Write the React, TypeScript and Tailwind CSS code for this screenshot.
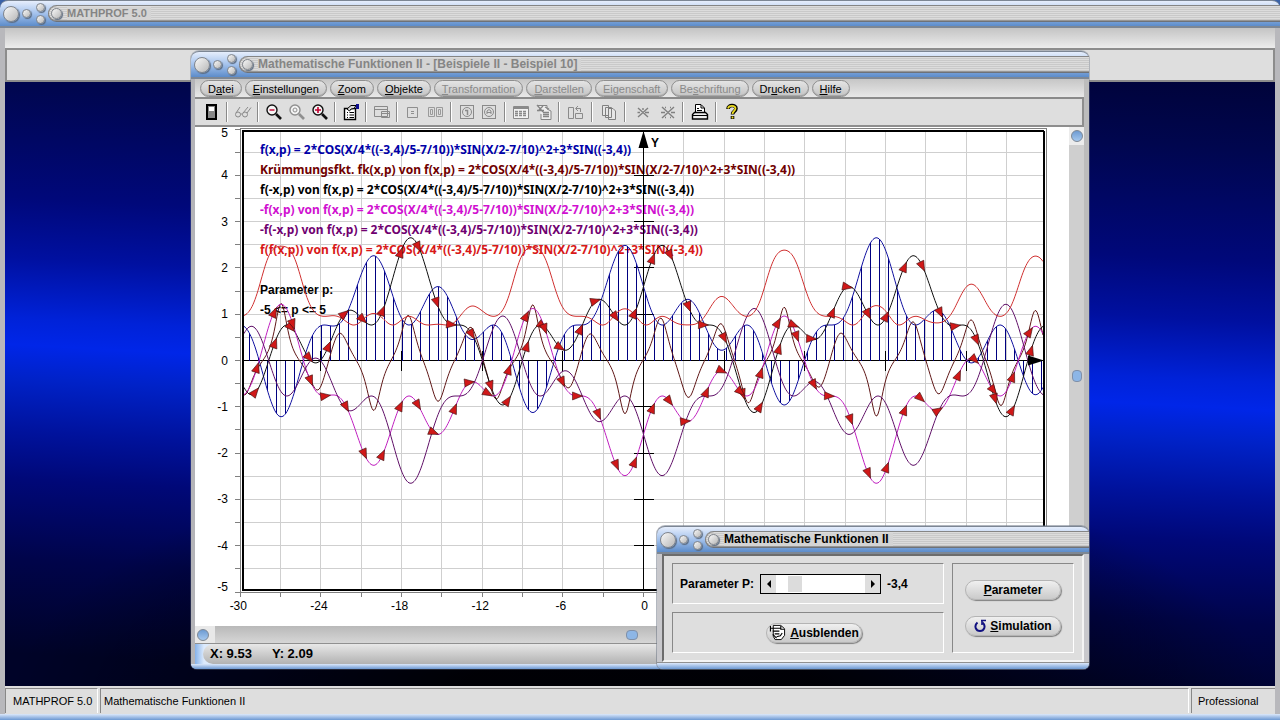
import { useState } from 'react';
import type { ReactNode } from 'react';
import clsx from 'clsx';

const X_MIN = -30;
const X_MAX = 30;
const UNIT_X = 13.44;
const UNIT_Y = 46.3;
const ORIGIN = { x: 448.5, y: 233.5 };
const PLOT = { left: 48, right: 849, top: 3, bottom: 463 };

const px = (x: number) => ORIGIN.x + x * UNIT_X;
const py = (y: number) => ORIGIN.y - y * UNIT_Y;

type Fn = (x: number) => number;

function makeFunctions(p: number) {
  const f: Fn = x => 2 * Math.cos((x / 4) * (p / 5 - 0.7)) * Math.sin(x / 2 - 0.7) ** 2 + 3 * Math.sin(p);
  const h = 0.001;
  const curvature: Fn = x => {
    const d1 = (f(x + h) - f(x - h)) / (2 * h);
    const d2 = (f(x + h) - 2 * f(x) + f(x - h)) / (h * h);
    return d2 / Math.pow(1 + d1 * d1, 1.5);
  };
  return { f, curvature };
}

function curvePath(fn: Fn) {
  const points: string[] = [];
  for (let sx = PLOT.left + 1; sx <= PLOT.right - 1; sx++) {
    const x = (sx - ORIGIN.x) / UNIT_X;
    points.push(`${sx},${py(fn(x)).toFixed(1)}`);
  }
  return `M${points.join('L')}`;
}

function range(start: number, end: number, step: number) {
  const out: number[] = [];
  for (let v = start; v <= end + 1e-9; v += step) out.push(v);
  return out;
}

function Arrows({ fn }: { fn: Fn }) {
  return (
    <g fill="#d01818" stroke="#401010" strokeWidth="0.6">
      {range(63.5, PLOT.right - 3, 18).map(sx => {
        const y = py(fn((sx - ORIGIN.x) / UNIT_X));
        const back = py(fn((sx - 5 - ORIGIN.x) / UNIT_X));
        const angle = (Math.atan2(y - back, 5) * 180) / Math.PI;
        return <path key={sx} d="M0 0L-10 -4L-10 4Z" transform={`translate(${sx} ${y}) rotate(${angle})`} />;
      })}
    </g>
  );
}

function Plot({ p }: { p: number }) {
  const { f, curvature } = makeFunctions(p);
  const pText = p.toFixed(1).replace('.', ',');
  const term = `2*COS(X/4*((${pText})/5-7/10))*SIN(X/2-7/10)^2+3*SIN((${pText}))`;
  const legend = [
    { text: `f(x,p) = ${term}`, color: '#0000a8' },
    { text: `Krümmungsfkt. fk(x,p) von f(x,p) = ${term}`, color: '#700000' },
    { text: `f(-x,p) von f(x,p) = ${term}`, color: '#000000' },
    { text: `-f(x,p) von f(x,p) = ${term}`, color: '#d010d0' },
    { text: `-f(-x,p) von f(x,p) = ${term}`, color: '#700070' },
    { text: `f(f(x,p)) von f(x,p) = ${term}`, color: '#d81818' },
  ];

  return (
    <svg viewBox="0 0 874 499" className="block h-full w-full" role="img" aria-label="Funktionsgraph">
      {/* Grid */}
      <g stroke="#cfcfcf" shapeRendering="crispEdges">
        {range(X_MIN + 3, X_MAX - 3, 3).map(x => (
          <line key={x} x1={px(x)} x2={px(x)} y1={PLOT.top} y2={PLOT.bottom} />
        ))}
        {range(-4.5, 4.5, 0.5).map(y => (
          <line key={y} x1={PLOT.left} x2={PLOT.right} y1={py(y)} y2={py(y)} />
        ))}
      </g>

      {/* Legend */}
      <g fontWeight="bold" fontSize="12">
        {legend.map((item, i) => (
          <text key={item.color} x="65" y={27 + i * 20} fill={item.color} className="font-['Noto_Sans',sans-serif]">
            {item.text}
          </text>
        ))}
        <text x="65" y="167">Parameter p:</text>
        <text x="65" y="187">-5 &lt;= p &lt;= 5</text>
        <text x="456" y="20">Y</text>
      </g>

      {/* Axes */}
      <g stroke="#000" shapeRendering="crispEdges">
        <line x1={PLOT.left} x2={PLOT.right} y1={ORIGIN.y} y2={ORIGIN.y} />
        <line x1={ORIGIN.x} x2={ORIGIN.x} y1={PLOT.top} y2={PLOT.bottom} />
        {range(-24, 24, 6).map(x => (
          <line key={x} x1={px(x)} x2={px(x)} y1={ORIGIN.y - 10} y2={ORIGIN.y + 10} />
        ))}
        {range(-4, 4, 1).map(y => (
          <line key={y} x1={ORIGIN.x - 10} x2={ORIGIN.x + 10} y1={py(y)} y2={py(y)} />
        ))}
      </g>

      {/* Hatching between f and the x axis */}
      <g stroke="#000080" shapeRendering="crispEdges">
        {range(54.5, PLOT.right - 1, 9).map(sx => (
          <line key={sx} x1={sx} x2={sx} y1={ORIGIN.y} y2={py(f((sx - ORIGIN.x) / UNIT_X))} />
        ))}
      </g>

      {/* Curves */}
      <g fill="none">
        <path d={curvePath(f)} stroke="#1010a0" />
        <path d={curvePath(curvature)} stroke="#601818" />
        <path d={curvePath(x => f(-x))} stroke="#101010" />
        <path d={curvePath(x => -f(x))} stroke="#c020c0" />
        <path d={curvePath(x => -f(-x))} stroke="#601068" />
        <path d={curvePath(x => f(f(x)))} stroke="#d03030" />
      </g>
      <Arrows fn={x => f(-x)} />
      <Arrows fn={x => -f(x)} />
      <path d="M448.500 4L443.500 21H453.500Z" />
      <path d="M849 233.500L833 228.500V238.500Z" />

      {/* Frame and scales */}
      <g fill="none" shapeRendering="crispEdges">
        <rect x="45.500" y="1.500" width="806" height="464" stroke="#808080" />
        <path d="M48 463.500V4H849" stroke="#000" strokeWidth="2" />
        <path d="M48 463H849V4" stroke="#000" strokeWidth="2" />
        <g stroke="#808080">
          {range(-5, 5, 0.5).map(y => (
            <line key={y} x1="40" x2="45" y1={py(y)} y2={py(y)} />
          ))}
          {range(X_MIN, X_MAX, 3).map(x => (
            <line key={x} x1={px(x)} x2={px(x)} y1="466" y2="470" />
          ))}
        </g>
      </g>
      <g fontSize="12">
        {range(-5, 5, 1).map(y => (
          <text key={y} x="33" y={Math.min(Math.max(py(y) + 4, 10), 464)} textAnchor="end">{y}</text>
        ))}
        {range(X_MIN, X_MAX, 6).map(x => (
          <text key={x} x={px(x) - (x < 0 ? 2 : -1)} y="483" textAnchor="middle">{x}</text>
        ))}
      </g>
    </svg>
  );
}

function Knob({ className }: { className: string }) {
  return (
    <span
      className={clsx(
        'block rounded-full border border-[#80858c] bg-linear-to-br from-[#f8f8f8] to-[#b8b8b8] shadow-[1px_1px_1px_#5b6b80]',
        className,
      )}
    />
  );
}

type TitleBarProps = { title: string; active?: boolean; small?: boolean };

function TitleBar({ title, active, small }: TitleBarProps) {
  return (
    <header className="flex h-7 shrink-0 items-center rounded-t-lg border-t border-b-2 border-t-[#7c8694] border-b-[#7d8794] bg-linear-to-b from-[#e6eefc] via-[#a4c2ec] to-[#5c8cca]">
      <div className="flex items-center gap-[3px] px-[3px]">
        <Knob className="size-4" />
        <Knob className="size-[9px]" />
        <div className="flex flex-col gap-[3px] pl-[2px]">
          <Knob className="size-[9px]" />
          <Knob className="size-[9px]" />
        </div>
      </div>
      <div className="flex h-[17px] min-w-0 flex-1 items-center gap-[5px] rounded-l-full border-y border-t-[#858585] border-b-[#6e7278] bg-[repeating-linear-gradient(180deg,#dcdcdc_0px,#dcdcdc_1px,#c9c9c9_1px,#c9c9c9_2px)] pl-[3px] shadow-[inset_1px_0_0_#808080,inset_0_-1px_0_#969696]">
        <Knob className="size-[11px]" />
        <h1
          className={clsx(
            'truncate bg-[#d4d4d4] pr-1 leading-[13px] font-bold',
            small ? 'text-[11px]' : 'text-[12px]',
            active ? 'text-black' : 'text-[#858585]',
          )}
        >
          {title}
        </h1>
      </div>
    </header>
  );
}

/* The character after "&" is the access key and gets underlined */
function Label({ text }: { text: string }) {
  const at = text.indexOf('&');
  if (at < 0) return <span>{text}</span>;
  return (
    <span>
      {text.slice(0, at)}
      <u className="underline-offset-1">{text[at + 1]}</u>
      {text.slice(at + 2)}
    </span>
  );
}

const menuItems = [
  { label: 'D&atei' },
  { label: '&Einstellungen' },
  { label: '&Zoom' },
  { label: '&Objekte' },
  { label: '&Transformation', disabled: true },
  { label: '&Darstellen', disabled: true },
  { label: 'Ei&genschaft', disabled: true },
  { label: 'Be&schriftung', disabled: true },
  { label: 'Dr&ucken' },
  { label: '&Hilfe' },
];

function MenuBar() {
  return (
    <nav className="flex h-5 shrink-0 gap-[3px] border-b-2 border-[#8a8a8a] bg-linear-to-b from-[#c6c6c6] to-[#e8e8e8] pt-px pl-[5px]">
      {menuItems.map(item => (
        <button
          key={item.label}
          type="button"
          disabled={item.disabled}
          className="h-[17px] rounded-full border border-[#8f8f8f] bg-linear-to-b from-[#e4e4e4] to-[#c4c4c4] px-[7px] text-[11px] leading-[14px] text-black shadow-[inset_0_-1px_0_#a8a8a8] disabled:text-[#8a8a8a]"
        >
          <Label text={item.label} />
        </button>
      ))}
    </nav>
  );
}

type Tool = { name: string; icon: ReactNode; wide?: boolean };

const Lens = ({ color, sign }: { color: string; sign: ReactNode }) => (
  <>
    <circle cx="7" cy="7" r="5" fill="#f4f4f4" stroke={color} strokeWidth="1.4" />
    {sign}
    <path d="M11 11L16 16" stroke={color} strokeWidth="2.6" />
  </>
);

const toolGroups: Tool[][] = [
  [
    {
      name: 'Schließen',
      icon: (
        <>
          <rect x="4" y="2" width="9" height="14" fill="#888" stroke="#000" strokeWidth="2" />
          <rect x="6" y="4" width="5" height="4" fill="#fff" />
        </>
      ),
    },
  ],
  [
    {
      name: 'Ansicht',
      icon: (
        <g stroke="#8a8a8a">
          <circle cx="4" cy="11.500" r="2.500" />
          <circle cx="11" cy="11.500" r="2.500" />
          <path d="M2 10L6 4M9 10L14 4M6.500 11H8.500M13 10L17 4.500" />
        </g>
      ),
    },
  ],
  [
    { name: 'Verkleinern', icon: <Lens color="#111" sign={<path d="M4.500 7H9.500" stroke="#c00030" strokeWidth="1.400" />} /> },
    { name: 'Originalgröße', icon: <Lens color="#8f8f8f" sign={<circle cx="7" cy="7" r="2" stroke="#8f8f8f" />} /> },
    { name: 'Vergrößern', icon: <Lens color="#111" sign={<path d="M4 7H10M7 4V10" stroke="#c00030" strokeWidth="1.600" />} /> },
  ],
  [
    {
      name: 'Eigenschaften',
      icon: (
        <>
          <path d="M2.500 5.500H13.500V16.500H2.500Z" fill="#fff" stroke="#000" strokeWidth="1.400" />
          <path d="M5 9.500H6M7.500 9.500H12M5 12H6M7.500 12H12M5 14.500H6M7.500 14.500H12" stroke="#000" />
          <path d="M5 6L9 2.500H14L12 5.500L9 6L7.500 8Z" fill="#ddd" stroke="#000" />
          <path d="M14 1H17V6H14Z" fill="#101090" />
        </>
      ),
    },
  ],
  [{ name: 'Fenster', icon: <path d="M1.500 3.500H14.500V13.500H1.500ZM1.500 6.500H14.500M8.500 8.500H16.500V14.500H8.500ZM8.500 10.500H16" fill="#dedede" stroke="#8a8a8a" /> }],
  [
    { name: 'Punkt', icon: <path d="M3.500 4.500H13.500V14.500H3.500ZM7 8.500H10M7 10.500H10" stroke="#8f8f8f" /> },
    { name: 'Bereich', icon: <path d="M1.500 4.500H7.500V13.500H1.500ZM9.500 4.500H15.500V13.500H9.500ZM3.500 6.500H5.500V11.500H3.500ZM11.500 6.500H13.500V11.500H11.500Z" stroke="#9a9a9a" /> },
  ],
  [
    {
      name: 'Info',
      icon: (
        <g stroke="#8a8a8a">
          <rect x="2.500" y="2.500" width="13" height="13" />
          <circle cx="9" cy="9" r="4.500" />
          <path d="M7 7.500H9.500V12" strokeWidth="1.500" />
        </g>
      ),
    },
    {
      name: 'Analyse',
      icon: (
        <g stroke="#8a8a8a">
          <rect x="1.500" y="2.500" width="13" height="13" />
          <circle cx="8" cy="9" r="4.500" />
          <path d="M6 11V8L8 6.500L10 8V11M6 9.500H10" />
        </g>
      ),
    },
  ],
  [
    {
      name: 'Tabelle',
      icon: (
        <g stroke="#8a8a8a">
          <path d="M1.500 3.500H16.500V15.500H1.500Z" fill="#f2f2f2" />
          <path d="M2 5H16" strokeWidth="2" />
          <path d="M3 8.500H15M3 10.500H15M3 12.500H15" strokeDasharray="3 1" strokeWidth="1.400" />
        </g>
      ),
    },
    {
      name: 'Notiz',
      icon: (
        <g stroke="#858585">
          <path d="M2 2.500H12V6L16 8V16.500H6V11" fill="#eee" />
          <path d="M2 2L8 9M8 3L3 8M2 7.500H9M10 4L14 6M8 9.500H14M8 11.500H14M8 13.500H14" strokeWidth="1.300" />
        </g>
      ),
    },
  ],
  [{ name: 'Anordnen', wide: true, icon: <path d="M1.500 4.500H6.500V15.500H1.500ZM8.500 10.500H15.500V15.500H8.500ZM9 5.500H13.500V9M11 3L8.500 5.500L11 8" stroke="#8a8a8a" /> }],
  [{ name: 'Kopieren', wide: true, icon: <path d="M2.500 2.500H8.500V12.500H2.500ZM5.500 4.500H11.500V14.500H5.500ZM8.500 5.500H13L15.500 8V16.500H8.500Z" fill="#e6e6e6" stroke="#808080" /> }],
  [
    { name: 'Entfernen', wide: true, icon: <path d="M5 5L15 14M15 5L5 14M4.500 9.500H7M12 9.500H16M10 5V7" stroke="#808080" strokeWidth="1.400" /> },
    { name: 'Alle entfernen', wide: true, icon: <path d="M4 4L16 15M16 4L4 15M3 9.500H7M13 9.500H17M7 4.500H8M12 4.500H13M7 14.500H8M12 14.500H13" stroke="#808080" strokeWidth="1.400" /> },
  ],
  [
    {
      name: 'Drucken',
      wide: true,
      icon: (
        <>
          <path d="M4.500 9V1.500H10L13.500 5V9" fill="#fff" stroke="#000" />
          <path d="M10 2V5H13M6 5.500H8M6 7.500H11" stroke="#000" />
          <path d="M3.500 9.500H14.500L16.500 11.500V16H1.500V11.500Z" fill="#eee" stroke="#000" strokeWidth="1.400" />
          <path d="M2 12.500H16" stroke="#000" />
        </>
      ),
    },
  ],
  [
    {
      name: 'Hilfe',
      wide: true,
      icon: (
        <>
          <path d="M4 6C4 1.500 12 1.500 12 5.500C12 8.500 8.500 8 8.500 11.500M8.500 13V16" stroke="#000" strokeWidth="3.600" />
          <path d="M4 5.500C4.500 2 11.500 2 11.500 5.500C11.500 8 8.500 8 8.500 11M8.500 13.500V15.500" stroke="#e8d820" strokeWidth="1.800" />
        </>
      ),
    },
  ],
];

function ToolBar() {
  return (
    <div role="toolbar" className="flex h-7 shrink-0 items-center border-r-2 border-b-2 border-[#8e8e8e] bg-[#dedede] pl-[5px]">
      {toolGroups.map((group, i) => (
        <div key={group[0].name} className="flex items-center">
          {i > 0 && <span className="mx-[3px] h-5 w-[2px] border-r border-l border-r-white border-l-[#8a8a8a]" />}
          {group.map(tool => (
            <button
              key={tool.name}
              type="button"
              aria-label={tool.name}
              className={clsx('flex h-6 items-center justify-center', tool.wide ? 'w-[25px]' : 'w-[23px]')}
            >
              <svg viewBox="0 0 18 18" className="size-[18px]" fill="none">{tool.icon}</svg>
            </button>
          ))}
        </div>
      ))}
    </div>
  );
}

const scrollKnob = 'size-3 shrink-0 rounded-full border border-[#7c8794] bg-linear-to-b from-[#6d9bd2] to-[#a5c8ee]';

function ChildWindow({ p }: { p: number }) {
  return (
    <section className="absolute inset-x-[191px] top-[51px] bottom-[51px] flex flex-col rounded-t-lg rounded-b-md bg-[#c4c8ce] shadow-[0_0_0_1px_#66708060]">
      <TitleBar title="Mathematische Funktionen II - [Beispiele II - Beispiel 10]" />
      <div className="flex min-h-0 flex-1 flex-col border-r-[5px] border-l-4 border-r-[#bcbcbc] border-l-[#b4b4b8]">
        <MenuBar />
        <ToolBar />
        <div className="flex min-h-0 flex-1 bg-white">
          <div className="min-w-0 flex-1">
            <Plot p={p} />
          </div>
          <div className="flex w-[15px] flex-col items-center bg-[#cfcfcf]">
            <span className="flex h-[18px] w-full justify-center bg-[#ececec] pt-[3px]">
              <button type="button" aria-label="Nach oben" className={scrollKnob} />
            </span>
            <input
              type="range"
              aria-label="Vertikal verschieben"
              defaultValue={48}
              className="min-h-0 w-[15px] flex-1 appearance-none bg-transparent [writing-mode:vertical-lr] [&::-webkit-slider-thumb]:h-3 [&::-webkit-slider-thumb]:w-[10px] [&::-webkit-slider-thumb]:appearance-none [&::-webkit-slider-thumb]:rounded [&::-webkit-slider-thumb]:border [&::-webkit-slider-thumb]:border-[#8090a8] [&::-webkit-slider-thumb]:bg-[#8db6e6]"
            />
          </div>
        </div>
        <div className="flex h-[17px] shrink-0 items-center bg-linear-to-b from-[#b9b9b9] to-[#d6d6d6]">
          <span className="flex h-full w-5 items-center bg-[#e8e8e8] pl-[2px]">
            <button type="button" aria-label="Nach links" className={scrollKnob} />
          </span>
          <input
            type="range"
            aria-label="Horizontal verschieben"
            defaultValue={48}
            className="h-[17px] min-w-0 flex-1 appearance-none bg-transparent [&::-webkit-slider-thumb]:h-[10px] [&::-webkit-slider-thumb]:w-3 [&::-webkit-slider-thumb]:appearance-none [&::-webkit-slider-thumb]:rounded [&::-webkit-slider-thumb]:border [&::-webkit-slider-thumb]:border-[#8090a8] [&::-webkit-slider-thumb]:bg-[#8db6e6]"
          />
        </div>
        <footer className="flex h-[21px] shrink-0 border-t border-[#909090] bg-linear-to-r from-[#86b2ea] to-[#dceafc] to-1% pl-2">
          <div className="flex flex-1 items-center gap-5 rounded-l-full bg-linear-to-b from-[#e8e8e8] to-[#b2b2b2] pl-[7px] text-[13px] font-bold">
            <span>X: 9.53</span>
            <span>Y: 2.09</span>
          </div>
        </footer>
      </div>
      <div className="h-[5px] shrink-0 rounded-b-md bg-linear-to-b from-[#dce8fa] to-[#6c98d2]" />
    </section>
  );
}

function PillButton({ label, icon }: { label: string; icon?: ReactNode }) {
  return (
    <button
      type="button"
      className="flex h-5 w-24 items-center justify-center gap-1 rounded-full border border-[#b4b4b4] bg-linear-to-b from-[#f0f0f0] to-[#cacaca] text-[12px] leading-4 font-bold shadow-[1px_1px_1px_#808080]"
    >
      {icon}
      <Label text={label} />
    </button>
  );
}

const groupBox = 'border border-t-[#888] border-r-white border-b-white border-l-[#888]';

function ParameterDialog({ p, onChange }: { p: number; onChange: (p: number) => void }) {
  const step = (delta: number) => onChange(Math.max(-5, Math.min(5, Math.round((p + delta) * 10) / 10)));

  return (
    <section className="absolute right-[191px] bottom-[51px] flex w-[432px] flex-col rounded-t-lg rounded-b-md bg-[#c8c8cc] shadow-[0_0_0_1px_#66708080]">
      <TitleBar title="Mathematische Funktionen II" active />
      <div className="mx-[5px] flex gap-2 border-2 border-t-[#6c6c6c] border-r-[#f4f4f4] border-b-[#f4f4f4] border-l-[#6c6c6c] bg-[#dedede] px-2 py-[7px]">
        <div className="flex flex-1 flex-col gap-2">
          <div className={clsx('flex h-[41px] items-center gap-[6px] pl-[7px]', groupBox)}>
            <label htmlFor="param-p" className="text-[12px] font-bold">Parameter P:</label>
            <div className="flex h-5 w-[121px] items-center border border-black bg-white">
              <button type="button" aria-label="Kleiner" onClick={() => step(-0.1)} className="flex h-full w-[15px] items-center justify-center bg-[#dedede]">
                <svg viewBox="0 0 4 8" className="h-2 w-1"><path d="M4 0V8L0 4Z" /></svg>
              </button>
              <input
                id="param-p"
                type="range"
                min={-5}
                max={5}
                step={0.1}
                value={p}
                onChange={e => onChange(Number(e.target.value))}
                className="h-[18px] min-w-0 flex-1 appearance-none bg-transparent [&::-webkit-slider-thumb]:h-4 [&::-webkit-slider-thumb]:w-[14px] [&::-webkit-slider-thumb]:appearance-none [&::-webkit-slider-thumb]:bg-[#dcdcdc]"
              />
              <button type="button" aria-label="Größer" onClick={() => step(0.1)} className="flex h-full w-[15px] items-center justify-center bg-[#dedede]">
                <svg viewBox="0 0 4 8" className="h-2 w-1"><path d="M0 0V8L4 4Z" /></svg>
              </button>
            </div>
            <output htmlFor="param-p" className="text-[12px] font-bold">{p.toFixed(1).replace('.', ',')}</output>
          </div>
          <div className={clsx('flex h-[41px] items-center justify-center pl-3', groupBox)}>
            <PillButton
              label="&Ausblenden"
              icon={
                <svg viewBox="0 0 18 18" className="size-[17px] shrink-0" fill="none" stroke="#000">
                  <path d="M4.500 1.500H12.500L16.500 5V12L13 16.500H6.500L4.500 13Z" fill="#fff" />
                  <path d="M1.500 2V8M1 4.500H4M4 4.500H12M4 7.500H11M6 10.500H11M12.500 2V5.500H16M8 13.500L12 12.500L14 9.500M4 11L8 15" strokeWidth="1.200" />
                </svg>
              }
            />
          </div>
        </div>
        <div className={clsx('flex w-[122px] flex-col items-center justify-center gap-4', groupBox)}>
          <PillButton label="&Parameter" />
          <PillButton
            label="&Simulation"
            icon={
              <svg viewBox="0 0 12 14" className="h-[14px] w-3 shrink-0" fill="none" stroke="#101080" strokeWidth="2">
                <path d="M3.500 3.500C-0.500 7 2 12 6 12C10 12 12.500 7 8.500 3.500" />
                <path d="M7 1.500H12M8 1V6" strokeWidth="1.600" />
              </svg>
            }
          />
        </div>
      </div>
      <div className="h-px bg-[#909090]" />
      <div className="h-[6px] rounded-b-md bg-linear-to-b from-[#dce8fa] to-[#6c98d2]" />
    </section>
  );
}

export default function App() {
  const [p, setP] = useState(-3.4);

  return (
    <div className="relative flex h-screen w-full flex-col overflow-hidden bg-[#3a62a8] font-['Liberation_Sans',Arial,sans-serif] text-black">
      <TitleBar title="MATHPROF 5.0" small />
      <main className="flex min-h-0 flex-1 flex-col border-x-[5px] border-[#b8b8bc]">
        <div className="h-[22px] shrink-0 border-b-2 border-[#8c8c8c] bg-linear-to-b from-[#c4c4c4] to-[#ececec]" />
        <div className="h-8 shrink-0 border-r-2 border-b-2 border-l-2 border-[#8c8c8c] bg-[#dedede]" />
        <div className="flex-1 bg-[radial-gradient(ellipse_50%_45%_at_50%_105%,#000000e0_30%,transparent),linear-gradient(183deg,#00033a_0%,#00064e_10%,#00087a_27%,#0010a0_36%,#0022d8_45%,#0026e8_49%,#0022c8_54%,#00129c_62%,#000878_69%,#00044a_81%,#000328_95%)]" />
        <footer className="flex h-7 shrink-0 gap-[2px] bg-[#dedede] pt-[2px] pb-px text-[11px]">
          <div className="flex w-[93px] items-center border-t border-r border-l border-[#888] border-r-white pl-[7px]">MATHPROF 5.0</div>
          <div className="flex flex-1 items-center border-t border-r border-l border-[#888] border-r-white pl-[3px]">Mathematische Funktionen II</div>
          <div className="flex w-[84px] items-center border-t border-l border-[#888] pl-[6px]">Professional</div>
        </footer>
      </main>
      <div className="h-[6px] shrink-0 bg-linear-to-b from-[#dce8fa] to-[#6c98d2]" />

      <ChildWindow p={p} />
      <ParameterDialog p={p} onChange={setP} />
    </div>
  );
}
